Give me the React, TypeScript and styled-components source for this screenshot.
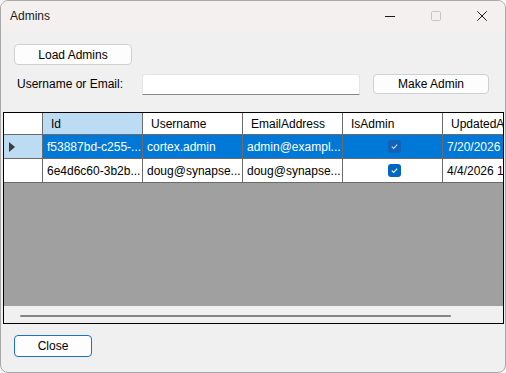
import React from 'react';
import styled, {createGlobalStyle} from 'styled-components';

type AdminRowType = {
    id: string
    username: string
    email: string
    isAdmin: boolean
    updatedAt: string
}

const rows: AdminRowType[] = [
    {id: 'f53887bd-c255-...', username: 'cortex.admin', email: 'admin@exampl...', isAdmin: true, updatedAt: '7/20/2026 2'},
    {id: '6e4d6c60-3b2b...', username: 'doug@synapse...', email: 'doug@synapse...', isAdmin: true, updatedAt: '4/4/2026 10'},
]

const columns = ['Id', 'Username', 'EmailAddress', 'IsAdmin', 'UpdatedAt']

const Global = createGlobalStyle`
  html, body {
    margin: 0;
    background: #f7f7f7;
  }
  * {
    box-sizing: border-box;
  }
`

const Window = styled.div`
  width: 506px;
  height: 373px;
  border: 1px solid #a8a8a8;
  border-radius: 8px;
  overflow: hidden;
  background: #f0f0f0;
  display: flex;
  flex-direction: column;
  font-family: "Liberation Sans", Arial, sans-serif;
  font-size: 12px;
  color: #000;
`

const TitleBar = styled.div`
  height: 30px;
  flex-shrink: 0;
  background: #f3f0ef;
  display: flex;
  align-items: center;
  padding-left: 9px;
`

const Title = styled.span`
  flex: 1;
  font-size: 12px;
  color: #1a1a1a;
`

const CaptionButton = styled.div`
  width: 46px;
  height: 30px;
  display: flex;
  align-items: center;
  justify-content: center;
`

const Content = styled.div`
  flex: 1;
  display: flex;
  flex-direction: column;
`

const Button = styled.button<{ $width: number, $focused?: boolean }>`
  width: ${props => props.$width}px;
  height: 21px;
  padding: 0;
  background: #fdfdfd;
  border: 1px solid ${props => props.$focused ? '#1a73c8' : '#d0d0d0'};
  border-radius: 4px;
  font-family: inherit;
  font-size: 12px;
  color: #000;
`

const LoadRow = styled.div`
  margin: 13px 0 0 13px;
  display: flex;
`

const SearchRow = styled.div`
  margin: 8px 0 0 0;
  padding-left: 16px;
  height: 22px;
  display: flex;
  align-items: center;
`

const Label = styled.span`
  width: 125px;
`

const TextInput = styled.div`
  width: 218px;
  height: 21px;
  background: #fff;
  border: 1px solid #e4e4e4;
  border-bottom-color: #868686;
  border-radius: 3px 3px 0 0;
  margin-right: 13px;
`

const Grid = styled.div`
  margin: 17px 0 0 2px;
  width: 501px;
  height: 212px;
  border: 1px solid #000;
  display: flex;
  flex-direction: column;
  overflow: hidden;
`

const Row = styled.div<{ $height: number, $selected?: boolean }>`
  display: grid;
  grid-template-columns: 39px repeat(5, 100px);
  height: ${props => props.$height}px;
  flex-shrink: 0;
  background: ${props => props.$selected ? '#0078d7' : '#fff'};
  color: ${props => props.$selected ? '#fff' : '#000'};
`

const Cell = styled.div<{ $header?: boolean, $active?: boolean, $center?: boolean }>`
  border-right: 1px solid #6b6b6b;
  border-bottom: 1px solid #6b6b6b;
  background: ${props => props.$active ? '#bcdcf4' : 'transparent'};
  color: ${props => props.$active && !props.$header ? '#000' : 'inherit'};
  padding-left: ${props => props.$header ? 8 : 4}px;
  display: flex;
  align-items: center;
  justify-content: ${props => props.$center ? 'center' : 'flex-start'};
  white-space: nowrap;
  overflow: hidden;
`

const RowHead = styled(Cell)`
  background: ${props => props.$active ? '#bcdcf4' : '#fff'};
  padding-left: 5px;
`

const Workspace = styled.div`
  flex: 1;
  background: #a0a0a0;
`

const ScrollStrip = styled.div`
  height: 17px;
  flex-shrink: 0;
  display: flex;
  align-items: center;
  padding: 2px 0 0 16px;
  background: #f0f0f0;
`

const Thumb = styled.div`
  width: 431px;
  height: 2px;
  border-radius: 1px;
  background: #858585;
`

const CheckBox = styled.div<{ $selected?: boolean }>`
  width: 13px;
  height: 13px;
  border-radius: 3px;
  background: ${props => props.$selected ? '#1262b8' : '#0067c0'};
  display: flex;
  align-items: center;
  justify-content: center;
`

const Footer = styled.div`
  margin: 11px 0 0 13px;
  display: flex;
`

const Check = ({selected}: { selected?: boolean }) => (
    <CheckBox $selected={selected}>
        <svg width="9" height="9" viewBox="0 0 9 9">
            <path d="M1.8 4.7 L3.7 6.4 L7.2 2.6" fill="none" stroke={selected ? '#c6dbf1' : '#fff'} strokeWidth="1.1"/>
        </svg>
    </CheckBox>
)

export default function App() {
    return (
        <>
            <Global/>
            <Window>
                <TitleBar>
                    <Title>Admins</Title>
                    <CaptionButton>
                        <svg width="10" height="10" viewBox="0 0 10 10">
                            <path d="M0 5.5 H10" stroke="#1a1a1a" strokeWidth="1"/>
                        </svg>
                    </CaptionButton>
                    <CaptionButton>
                        <svg width="10" height="10" viewBox="0 0 10 10">
                            <rect x="0.5" y="0.5" width="9" height="9" rx="1" fill="none" stroke="#c4c4c4"/>
                        </svg>
                    </CaptionButton>
                    <CaptionButton>
                        <svg width="10" height="10" viewBox="0 0 10 10">
                            <path d="M0.3 0.3 L9.7 9.7 M9.7 0.3 L0.3 9.7" stroke="#1a1a1a" strokeWidth="1"/>
                        </svg>
                    </CaptionButton>
                </TitleBar>
                <Content>
                    <LoadRow>
                        <Button $width={118}>Load Admins</Button>
                    </LoadRow>
                    <SearchRow>
                        <Label>Username or Email:</Label>
                        <TextInput/>
                        <Button $width={116} style={{height: 20}}>Make Admin</Button>
                    </SearchRow>
                    <Grid>
                        <Row $height={22}>
                            <RowHead $header/>
                            {columns.map((c, i) => (
                                <Cell key={c} $header $active={i === 0}>{c}</Cell>
                            ))}
                        </Row>
                        {rows.map((r, i) => (
                            <Row key={r.id} $height={24} $selected={i === 0}>
                                <RowHead $active={i === 0}>
                                    {i === 0 && (
                                        <svg width="6" height="10" viewBox="0 0 6 10">
                                            <path d="M0 0 L6 5 L0 10 Z" fill="#3c3c3c"/>
                                        </svg>
                                    )}
                                </RowHead>
                                <Cell>{r.id}</Cell>
                                <Cell>{r.username}</Cell>
                                <Cell>{r.email}</Cell>
                                <Cell $center>{r.isAdmin && <Check selected={i === 0}/>}</Cell>
                                <Cell>{r.updatedAt}</Cell>
                            </Row>
                        ))}
                        <Workspace/>
                        <ScrollStrip>
                            <Thumb/>
                        </ScrollStrip>
                    </Grid>
                    <Footer>
                        <Button $width={78} $focused style={{height: 22}}>Close</Button>
                    </Footer>
                </Content>
            </Window>
        </>
    );
}
